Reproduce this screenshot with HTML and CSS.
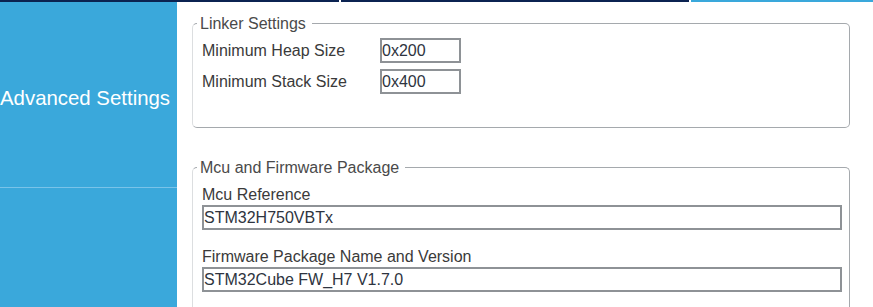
FILE: index.html
```html
<!DOCTYPE html>
<html>
<head>
<meta charset="utf-8">
<link rel="stylesheet" href="styles.css">
</head>
<body>
<div class="topbar">
  <div class="tab tab-a"></div>
  <div class="tab tab-b"></div>
  <div class="tab tab-c"></div>
</div>
<div class="main">
  <nav class="sidebar">
    <div class="side-item"><span class="side-label">Advanced Settings</span></div>
    <div class="side-item lower"></div>
  </nav>
  <section class="content">
    <fieldset class="group linker">
      <legend>Linker Settings</legend>
      <div class="grid">
        <label class="lbl">Minimum Heap Size</label>
        <input class="field small" type="text" value="0x200">
        <label class="lbl">Minimum Stack Size</label>
        <input class="field small" type="text" value="0x400">
      </div>
    </fieldset>
    <fieldset class="group mcu">
      <legend>Mcu and Firmware Package</legend>
      <div class="stack">
        <label class="lbl">Mcu Reference</label>
        <input class="field wide" type="text" value="STM32H750VBTx">
      </div>
      <div class="stack">
        <label class="lbl">Firmware Package Name and Version</label>
        <input class="field wide" type="text" value="STM32Cube FW_H7 V1.7.0">
      </div>
    </fieldset>
  </section>
</div>
</body>
</html>
```

FILE: styles.css
```css
* { box-sizing: border-box; }
html, body {
  margin: 0;
  padding: 0;
  width: 873px;
  height: 307px;
  overflow: hidden;
  background: #ffffff;
  font-family: "Liberation Sans", Arial, sans-serif;
}
.topbar {
  display: flex;
  gap: 2px;
  height: 2px;
  background: #ffffff;
}
.tab { height: 2px; }
.tab-a { width: 339px; background: #0b2351; }
.tab-b { width: 348px; background: #0b2351; }
.tab-c { flex: 1; background: #3aa8db; }

.main {
  display: flex;
  height: 305px;
}
.sidebar {
  width: 177px;
  flex: none;
  background: #3aa8db;
  display: flex;
  flex-direction: column;
  overflow: hidden;
}
.side-item {
  height: 186px;
  display: flex;
  align-items: center;
  padding-top: 8px;
  border-bottom: 1px solid #79c3e9;
  color: #ffffff;
  font-size: 20.4px;
  white-space: nowrap;
}
.side-label { margin-left: 0; }
.side-item.lower {
  border-bottom: none;
  flex: 1;
}

.content {
  flex: 1;
  padding: 12px 23px 0 15px;
  display: flex;
  flex-direction: column;
}
.group {
  margin: 0;
  border: 1px solid #a5a9ad;
  border-left-color: #dcdee0;
  border-radius: 5px;
  padding: 5px 7px 0 9px;
  min-width: 0;
}
.group legend {
  margin-left: -5px;
  padding: 1px 6px 0 3px;
  font-size: 16px;
  line-height: 18px;
  color: #4a4a4a;
}
.linker { padding-bottom: 33px; }
.mcu {
  margin-top: 30px;
  padding-top: 9px;
  flex: 1;
  border-bottom: none;
  border-bottom-left-radius: 0;
  border-bottom-right-radius: 0;
}
.grid {
  display: grid;
  grid-template-columns: 178px 81px;
  row-gap: 6px;
  align-items: center;
  padding-top: 0;
}
.lbl {
  font-size: 16px;
  line-height: 18px;
  color: #3a3a3a;
}
.grid .lbl { padding-top: 1px; }
.field {
  height: 25px;
  border: 2px solid #8e9296;
  padding: 0;
  margin: 0;
  font-family: "Liberation Sans", Arial, sans-serif;
  font-size: 16px;
  color: #2e3440;
  background: #ffffff;
  outline: none;
}
.small { width: 81px; }
.stack {
  display: flex;
  flex-direction: column;
  gap: 1px;
  margin-bottom: 18px;
}
.wide { width: 100%; }
```
